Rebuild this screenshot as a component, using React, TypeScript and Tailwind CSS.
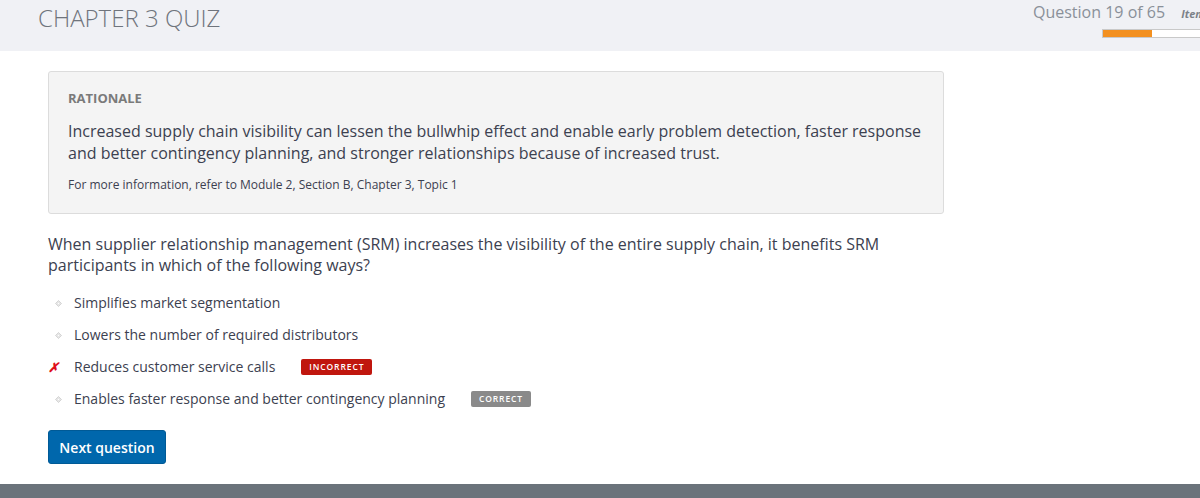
import React from "react";

const Bullet = () => (
  <svg width="7" height="7" viewBox="0 0 7 7" className="shrink-0">
    <path d="M3.5 0.5 L6.5 3.5 L3.5 6.5 L0.5 3.5 Z" fill="#e6e6e6" stroke="#cdcdcd" strokeWidth="0.8" />
    <rect x="3" y="3" width="1" height="1" fill="#ffffff" />
  </svg>
);

export default function App() {
  const font = { fontFamily: '"Open Sans", "Noto Sans", sans-serif' };
  return (
    <div className="w-[1200px] h-[498px] overflow-hidden bg-white flex flex-col" style={font}>
      <header className="h-[51px] bg-[#f0f1f5] flex items-start shrink-0 relative overflow-hidden">
        <h1 className="ml-[38px] mt-[3px] text-[24px] font-light text-[#6f747c] leading-[30px]">
          CHAPTER 3 QUIZ
        </h1>
        <div className="absolute left-[1033px] top-0 w-[200px] flex flex-col items-start">
          <div className="flex items-baseline mt-[1px] whitespace-nowrap">
            <span className="text-[16px] text-[#8a9099] leading-[22px] mr-[16px]">Question 19 of 65</span>
            <span className="text-[11px] italic font-bold text-[#7d8289]">Item</span>
          </div>
          <div className="ml-[69px] mt-[6px] w-[110px] h-[9px] border border-[#c9c9c9] bg-white flex">
            <div className="w-[49px] h-full bg-[#f39020]" />
          </div>
        </div>
      </header>
      <main className="flex-1 pl-[48px] pt-[20px]">
        <section className="w-[896px] h-[143px] bg-[#f4f4f4] border border-[#dcdcdc] rounded-[3px] px-[19px] pt-[17px]">
          <div className="text-[13px] font-bold text-[#7a7a7a] leading-[18px]">RATIONALE</div>
          <p className="mt-[13px] text-[16px] text-[#3c4150] leading-[22px]">
            Increased supply chain visibility can lessen the bullwhip effect and enable early problem detection, faster response and better contingency planning, and stronger relationships because of increased trust.
          </p>
          <p className="mt-[13px] text-[12px] text-[#3c4150] leading-[16px]">
            For more information, refer to Module 2, Section B, Chapter 3, Topic 1
          </p>
        </section>
        <p className="mt-[20px] w-[860px] text-[16px] text-[#3c4150] leading-[21px]">
          When supplier relationship management (SRM) increases the visibility of the entire supply chain, it benefits SRM participants in which of the following ways?
        </p>
        <ul className="mt-[11px] flex flex-col">
          {[
            { t: "Simplifies market segmentation" },
            { t: "Lowers the number of required distributors" },
            { t: "Reduces customer service calls", wrong: true },
            { t: "Enables faster response and better contingency planning", correct: true },
          ].map((o, i) => (
            <li key={i} className="h-[32px] flex items-center">
              <span className={`w-[26px] flex items-center ${o.wrong ? "justify-start" : "justify-center pr-[6px]"}`}>
                {o.wrong ? (
                  <span className="text-[#e0101a] text-[13px] font-bold italic leading-none">✗</span>
                ) : (
                  <Bullet />
                )}
              </span>
              <span className="text-[14px] text-[#3c4150] leading-[20px]">{o.t}</span>
              {o.wrong && (
                <span className="ml-[26px] w-[71px] h-[16px] rounded-[2px] bg-[#c0160e] text-white text-[8.5px] font-semibold tracking-[0.9px] flex items-center justify-center">
                  INCORRECT
                </span>
              )}
              {o.correct && (
                <span className="ml-[26px] w-[60px] h-[16px] rounded-[2px] bg-[#8a8a8a] text-white text-[8.5px] font-semibold tracking-[0.9px] flex items-center justify-center">
                  CORRECT
                </span>
              )}
            </li>
          ))}
        </ul>
        <button className="mt-[15px] w-[118px] h-[34px] rounded-[3px] bg-[#0067ac] text-white text-[14px] font-semibold flex items-center justify-center border border-[#005a96]">
          Next question
        </button>
      </main>
      <footer className="h-[14px] bg-[#6b737b] shrink-0" />
    </div>
  );
}
